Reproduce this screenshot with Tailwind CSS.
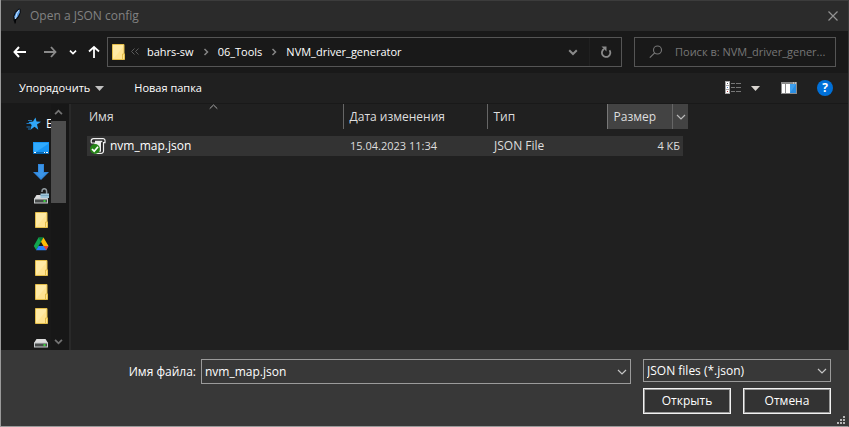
<!DOCTYPE html>
<html lang="ru">
<head>
<meta charset="utf-8">
<title>Open a JSON config</title>
<script src="https://cdn.jsdelivr.net/npm/@tailwindcss/browser@4"></script>
</head>
<body class="flex h-screen flex-col overflow-hidden border-x border-b border-l-[#9a9a9a] border-r-[#3c3c3c] border-b-[#9a9a9a] bg-[#202020] font-['Open_Sans','Noto_Sans',sans-serif] text-[12px] leading-4 text-white">

<svg class="hidden" aria-hidden="true">
  <symbol id="folder" viewBox="0 0 16 16">
    <path d="M1.5.5h11.500v9.500h.5v5.500H1.500z" fill="#ffe391" stroke="#e3bd4a"/>
    <path d="M2 1h10v2L3 14H2z" fill="#ffeaa5"/>
    <path d="M11.500 15v-5h2v5" fill="#ffe391" stroke="#e3bd4a"/>
  </symbol>
  <symbol id="chev" viewBox="0 0 10 10"><path d="M1 3l4 4 4-4" fill="none" stroke="currentColor" stroke-width="1.2"/></symbol>
  <symbol id="chevbold" viewBox="0 0 10 10"><path d="M1.2 3.2L5 7l3.800-3.800" fill="none" stroke="currentColor" stroke-width="2"/></symbol>
  <symbol id="crumb" viewBox="0 0 6 8"><path d="M1.500 1l3 3-3 3" fill="none" stroke="#858585" stroke-width="1.500"/></symbol>
  <symbol id="drive" viewBox="0 0 16 16">
    <path d="M3.500 7h9l2.500 4H1z" fill="#dcdcdc"/>
    <path d="M1 10.500h14V15.500H1z" fill="#c5c9ca"/>
    <path d="M2 11.500h12v3H2z" fill="#484c4c"/>
    <path d="M10.500 12.300h2v1.500h-2z" fill="#35ff35"/>
  </symbol>
</svg>

<header class="flex h-[31px] shrink-0 items-center border-t border-[#3c3c3c] bg-[#2b2b2b] pl-2 pr-[9px]">
  <svg class="h-4 w-4" viewBox="0 0 16 16"><path d="M6.300 15.500L4.500 12.500 4.300 8 6 4 10 .5l1.500.4.3 3.300L10 9l-3 3.500z" fill="#0a0d12"/><path d="M10.500 1.200L7 4.500 5.300 8.500l.5 3L8.800 8.500l2-4z" fill="#5ba0ea"/><path d="M10 2L7.800 5.500 6.500 11" fill="none" stroke="#d5eaff" stroke-width=".9"/><path d="M6.300 11l-.3 4.500" stroke="#000" stroke-width="1"/></svg>
  <h1 class="flex-1 pl-[5px] text-[#828282]">Open a JSON config</h1>
  <button aria-label="Закрыть" class="text-[#929292]"><svg class="h-3 w-3" viewBox="0 0 12 12"><path d="M1.500 1.500l9 9m0-9l-9 9" stroke="currentColor" stroke-width="1.200"/></svg></button>
</header>

<nav class="flex h-[42px] shrink-0 items-center bg-[#191919] pr-3 pb-px text-[11px]">
  <button aria-label="Назад" class="ml-3"><svg class="h-[14px] w-[14px]" viewBox="0 0 14 14"><path d="M6 2L1.500 7 6 12M1.500 7H13" fill="none" stroke="#fff" stroke-width="2"/></svg></button>
  <button aria-label="Вперёд" class="ml-4"><svg class="h-[14px] w-[14px]" viewBox="0 0 14 14"><path d="M8 2l4.500 5L8 12M12.500 7H1" fill="none" stroke="#8a8a8a" stroke-width="1.800"/></svg></button>
  <button aria-label="Последние" class="ml-3"><svg class="h-2 w-2"><use href="#chevbold"/></svg></button>
  <button aria-label="Вверх" class="ml-[10px]"><svg class="h-[14px] w-[14px]" viewBox="0 0 14 14"><path d="M2 6.500L7 2l5 4.500M7 2v11" fill="none" stroke="#fff" stroke-width="1.800"/></svg></button>
  <div class="ml-[6px] flex h-[30px] min-w-0 flex-1 items-center border border-[#555] pl-[3px]">
    <svg class="h-4 w-4 shrink-0"><use href="#folder"/></svg>
    <svg class="ml-1 h-[7px] w-2 shrink-0" viewBox="0 0 8 7"><path d="M3.500.5l-3 3 3 3m4-6l-3 3 3 3" fill="none" stroke="#5c5c5c"/></svg>
    <a href="#" class="ml-2">bahrs-sw</a>
    <svg class="mx-[9px] h-2 w-[6px] shrink-0"><use href="#crumb"/></svg>
    <a href="#">06_Tools</a>
    <svg class="mx-[9px] h-2 w-[6px] shrink-0"><use href="#crumb"/></svg>
    <a href="#">NVM_driver_generator</a>
    <button aria-label="Показать путь" class="ml-auto text-[#8a8a8a]"><svg class="h-[10px] w-[10px]"><use href="#chevbold"/></svg></button>
    <button aria-label="Обновить" class="ml-[11px] flex h-full w-8 items-center justify-center border-l border-[#202020]"><svg class="h-3 w-3" viewBox="0 0 12 12"><path d="M4 3.100A4.200 4.200 0 1 0 9.500 4.200" fill="none" stroke="#8a8a8a" stroke-width="1.800"/><path d="M1.500.5h5v5z" fill="#8a8a8a"/></svg></button>
  </div>
  <form class="ml-3 flex h-[30px] w-[202px] items-center border border-[#555] pl-[14px]">
    <label for="q" aria-label="Поиск"><svg class="h-[14px] w-[14px]" viewBox="0 0 14 14"><circle cx="8.500" cy="5" r="4" fill="none" stroke="#767676" stroke-width="1.100"/><path d="M5.700 7.800L.8 12.700" stroke="#767676" stroke-width="1.200"/></svg></label>
    <input id="q" type="text" placeholder="Поиск в: NVM_driver_gener..." class="ml-3 w-full min-w-0 bg-transparent outline-none placeholder:text-[#777]">
  </form>
</nav>

<div class="flex h-[31px] shrink-0 items-center border-b border-[#191919] pl-[18px] pr-[15px] text-[11px]">
  <button class="flex items-center gap-[5px]">Упорядочить<svg class="h-[5px] w-[9px]" viewBox="0 0 9 5"><path d="M0 0h9L4.500 5z" fill="#c0c0c0"/></svg></button>
  <button class="ml-[30px]">Новая папка</button>
  <button aria-label="Вид" class="ml-auto flex items-center gap-[9px]">
    <svg class="h-[14px] w-[17px]" viewBox="0 0 17 14"><path d="M0 0h5v13H0z" fill="#a8a8a8"/><path d="M1 1h3v3H1zm0 4h3v3H1zm0 4h3v3H1z" fill="#fff"/><path d="M2 2h1v1H2z" fill="#555"/><path d="M2 6h1v1H2z" fill="#477bc4"/><path d="M2 10h1v1H2z" fill="#a33"/><path d="M6 2.500h4m1 0h5M6 6.500h4m1 0h5M6 10.500h4m1 0h5" stroke="#777"/></svg>
    <svg class="h-[5px] w-[9px]" viewBox="0 0 9 5"><path d="M0 0h9L4.500 5z" fill="#d8d4cf"/></svg>
  </button>
  <button aria-label="Область просмотра" class="ml-[21px]"><svg class="h-3 w-4" viewBox="0 0 16 12"><path d="M0 0h16v12H0z" fill="#8c8c8c"/><path d="M1 2h3v9H1zm4 0h4v9H5z" fill="#fff"/><path d="M9 2h6v9H9z" fill="#3fa0ee"/><path d="M15 2v9H9z" fill="#2b8ee2"/><path d="M12 .5h1v1h-1zm2 0h1v1h-1z" fill="#eee"/></svg></button>
  <button aria-label="Справка" class="ml-5 flex h-4 w-4 items-center justify-center rounded-full bg-[#0070d8] text-[12px] font-bold">?</button>
</div>

<main class="flex min-h-0 flex-1">
  <aside class="flex w-[70px] shrink-0 border-r-2 border-[#292929] bg-[#191919]">
    <ul class="w-[50px] shrink-0 overflow-hidden pt-2">
      <li class="flex h-6 items-center pl-[25px]"><svg class="h-4 w-4 shrink-0" viewBox="0 0 16 16"><path d="M9.500 1.500l1 4 4.500.2-4 2.800 1.300 5.200L8.500 10.800 4.200 14l1.500-5L2.500 6l4.500-.4z" fill="#30a7f8"/><path d="M2 4.500h4M.5 7.500h4M.5 11h4M2 13h2" stroke="#1c76bd"/></svg><span class="pl-1">Б</span></li>
      <li class="flex h-6 items-center pl-8"><svg class="h-4 w-4" viewBox="0 0 16 16"><path d="M0 2h16v12H0z" fill="#1695f5"/><path d="M1 3h14v1L3 12H1z" fill="#31aafd"/><path d="M0 12h16v2H0z" fill="#0869b4"/><path d="M1 12.500h2m8 0h1m1 0h2" stroke="#fff"/></svg></li>
      <li class="flex h-6 items-center pl-8"><svg class="h-4 w-4" viewBox="0 0 16 16"><path d="M5 0h6v8h5L8 16 0 8h5z" fill="#3287dc"/><path d="M6 1h4v8h3l-5 5-5-5h3z" fill="#3b95e8"/></svg></li>
      <li class="flex h-6 items-center pl-8"><svg class="h-4 w-4" viewBox="0 0 16 16"><use href="#drive"/><path d="M9 4V3a2.300 2.300 0 0 1 4.600 0v3" fill="none" stroke="#8f989d" stroke-width="1.500"/><path d="M7.500 5.500H16V10H7.500z" fill="#9fc4d8"/><path d="M7.500 7.500H16" stroke="#7aa7c0"/></svg></li>
      <li class="flex h-6 items-center pl-[33px]"><svg class="h-4 w-4"><use href="#folder"/></svg></li>
      <li class="flex h-6 items-center pl-8"><svg class="h-4 w-4" viewBox="0 0 16 16"><path d="M5.500 1.500h5L3.200 14 .8 10z" fill="#11a64f"/><path d="M5.500 1.500h5L8 5.800z" fill="#087b38"/><path d="M10.500 1.500L15.500 10h-5L8 5.800z" fill="#ffbd08"/><path d="M5.500 10h10l-2.300 4.300H3z" fill="#2b82fc"/><path d="M10.500 10h5l-2.300 4.300z" fill="#ea4335"/></svg></li>
      <li class="flex h-6 items-center pl-[33px]"><svg class="h-4 w-4"><use href="#folder"/></svg></li>
      <li class="flex h-6 items-center pl-[33px]"><svg class="h-4 w-4"><use href="#folder"/></svg></li>
      <li class="flex h-6 items-center pl-[33px]"><svg class="h-4 w-4"><use href="#folder"/></svg></li>
      <li class="flex h-6 items-center pl-8"><svg class="h-4 w-4"><use href="#drive"/></svg></li>
    </ul>
    <div class="flex flex-1 flex-col items-center bg-[#171717] pr-[3px] text-[#737373]">
      <button aria-label="Прокрутить вверх" class="flex h-[17px] items-center"><svg class="h-[9px] w-[9px] rotate-180"><use href="#chevbold"/></svg></button>
      <div class="h-1/3 w-[15px] bg-[#4d4d4d]"></div>
      <button aria-label="Прокрутить вниз" class="mt-auto flex h-[17px] items-center"><svg class="h-[9px] w-[9px]"><use href="#chevbold"/></svg></button>
    </div>
  </aside>

  <section class="min-w-0 flex-1 pl-4">
    <table class="table-fixed border-collapse text-left">
      <colgroup><col class="w-[256px]"><col class="w-[144px]"><col class="w-[120px]"><col class="w-[76px]"><col class="w-[5px]"></colgroup>
      <thead class="text-[#dedede]">
        <tr class="h-[25px]">
          <th class="relative pl-[2px] font-normal">Имя<svg class="absolute top-0 left-[122px] h-[6px] w-[9px]" viewBox="0 0 9 6"><path d="M.7 4.700L4.500 1l3.800 3.700" fill="none" stroke="#aaa"/></svg></th>
          <th class="border-l border-[#666] pl-[6px] font-normal">Дата изменения</th>
          <th class="border-l border-[#666] pl-[6px] font-normal">Тип</th>
          <th colspan="2" class="border-l border-[#777] bg-[#434343] p-0 font-normal"><div class="flex h-[25px] items-center pl-[6px]"><span class="flex-1">Размер</span><button aria-label="Фильтр" class="flex h-full w-4 items-center justify-center border-l border-[#666] text-[#bbb]"><svg class="h-[10px] w-[10px]"><use href="#chev"/></svg></button></div></th>
        </tr>
      </thead>
      <tbody>
        <tr class="h-[7px]"></tr>
        <tr class="h-5 text-[#dedede]">
          <td class="bg-[#333] pl-[3px] text-white"><div class="flex items-center"><svg class="h-4 w-4" viewBox="0 0 16 16"><path d="M3.500.6H13a2 2 0 0 1 2 2v2h-1.500v8.400a2.400 2.400 0 0 1-2.400 2.400H5V5H2.200a1 1 0 0 1-1-1V2.800A2.300 2.300 0 0 1 3.500.6z" fill="#2a2a2a" stroke="#f0f0f0" stroke-width="1.200"/><path d="M5 2.800h7.300v1.500H11v9.500H5z" fill="#ededed"/><circle cx="5" cy="11" r="4.900" fill="#258417"/><path d="M2 11l2.200 2.200L8 8.800" fill="none" stroke="#fff" stroke-width="1.700"/></svg><span class="pl-1">nvm_map.json</span></div></td>
          <td class="bg-[#333] pl-[7px] text-[11px]">15.04.2023 11:34</td>
          <td class="bg-[#333] pl-[7px]">JSON File</td>
          <td class="bg-[#333] pr-[3px] text-right text-[11px]">4 КБ</td>
          <td></td>
        </tr>
      </tbody>
    </table>
  </section>
</main>

<footer class="relative flex h-[76px] shrink-0 gap-3 bg-[#383838] pt-[9px] pr-[17px]">
  <div class="flex h-[25px] min-w-0 flex-1 items-center">
    <label for="fn" class="w-[200px] shrink-0 pr-[5px] text-right">Имя файла:</label>
    <div class="flex h-full min-w-0 flex-1 items-center border border-[#9b9b9b]">
      <input id="fn" type="text" value="nvm_map.json" class="min-w-0 flex-1 bg-transparent pl-[3px] outline-none">
      <button aria-label="Список файлов" class="px-[3px] text-[#c5c5c5]"><svg class="h-[10px] w-[10px]"><use href="#chev"/></svg></button>
    </div>
  </div>
  <div class="grid w-[188px] grid-cols-2 content-start gap-x-3 gap-y-[6px]">
    <div class="relative col-span-2">
      <select aria-label="Тип файлов" class="block h-[23px] w-full appearance-none border border-[#9b9b9b] bg-[#383838] pl-[3px] outline-none"><option>JSON files (*.json)</option></select>
      <svg class="pointer-events-none absolute top-[7px] right-1 h-[10px] w-[10px] text-[#c5c5c5]"><use href="#chev"/></svg>
    </div>
    <button class="h-[26px] border border-[#f2f2f2] bg-[#333] inset-ring inset-ring-[#9b9b9b]">Открыть</button>
    <button class="h-[26px] border border-[#f2f2f2] bg-[#333] inset-ring inset-ring-[#9b9b9b]">Отмена</button>
  </div>
  <svg class="absolute right-[3px] bottom-[2px] h-2 w-2" viewBox="0 0 8 8"><path d="M6 0h2v2H6zM3 3h2v2H3zm3 0h2v2H6zM0 6h2v2H0zm3 0h2v2H3zm3 0h2v2H6z" fill="#b5b5b5"/></svg>
</footer>
</body>
</html>
